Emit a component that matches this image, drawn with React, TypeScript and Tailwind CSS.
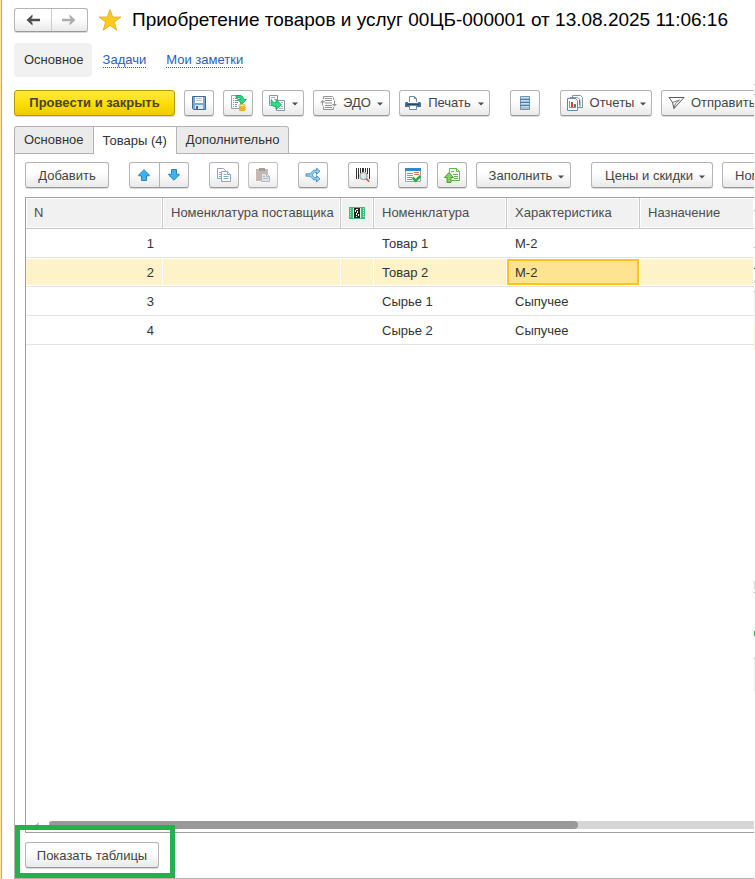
import React from 'react';
import clsx from 'clsx';

type ButtonProps = {
  children: React.ReactNode;
  label?: string;
  className?: string;
  disabled?: boolean;
};

const buttonBase =
  'flex h-[26px] shrink-0 items-center justify-center rounded-[3px] border border-[#b4b4b4] border-b-[#999] bg-linear-to-b from-white from-40% to-[#e9e9e9] whitespace-nowrap text-[#444] shadow-[0_1px_0_#d9d9d9]';

const ToolButton = ({ children, label, className, disabled }: ButtonProps) => (
  <button type="button" aria-label={label} disabled={disabled} className={clsx(buttonBase, className ?? 'w-[30px]')}>
    {children}
  </button>
);

const Caret = () => (
  <svg width="6" height="4" viewBox="0 0 6 4" className="mt-0.5 shrink-0">
    <path d="M0 0.5h6L3 3.5z" fill="#4d4d4d" />
  </svg>
);

const ArrowIcon = ({ color, flip }: { color: string; flip?: boolean }) => (
  <svg width="14" height="12" viewBox="0 0 14 12" className={flip ? 'rotate-180' : ''}>
    <path d="M6.5 0.5 0.5 6l6 5.500V8.700L5 7.200H14V4.800H5L6.500 3.300z" fill={color} />
  </svg>
);

const StarIcon = () => (
  <svg width="24" height="24" viewBox="0 0 24 24" className="shrink-0">
    <path
      d="M12 1.500 14.700 9h8.300l-6.600 5 2.400 8.300L12 17.400l-6.800 4.900L7.600 14 1 9h8.300z"
      fill="#fbcb1e"
      stroke="#e0ac0c"
      strokeWidth="0.8"
    />
  </svg>
);

const SaveIcon = () => (
  <svg width="16" height="16" viewBox="0 0 16 16">
    <path d="M1.500 1.500h13v13h-12l-1-1z" fill="#7ba7d4" stroke="#3f6a98" />
    <path d="M4 2h8v6H4z" fill="#fff" />
    <path d="M5 3.500h6M5 5.500h6" stroke="#a9c4de" />
    <path d="M4 10h8v4H4z" fill="#dfe6ec" />
    <path d="M5 11h2v3H5z" fill="#3f6a98" />
  </svg>
);

const PostIcon = () => (
  <svg width="18" height="18" viewBox="0 0 18 18">
    <path d="M2.500 1.500h9v13h-9z" fill="#fff" stroke="#8fa2b1" />
    <path d="M4 4.500h1M6 4.500h3M4 6.500h1M6 6.500h3M4 8.500h1M6 8.500h3M4 10.500h1M6 10.500h2M4 12.500h1M6 12.500h2" stroke="#8093a3" />
    <path d="M7 1.500h3c3.300 0 4.500 1.500 4.500 4H17.300L13 10 8.800 5.500H11.500C11.500 4 10 3.500 7 3.500z" fill="#27dc84" stroke="#109a52" strokeWidth="0.8" />
    <path d="M10 11.500v4.500c0 1.800 6.500 1.800 6.500 0v-4.500z" fill="#f3cc3c" />
    <path d="M10 13.500c1 1.400 5.500 1.400 6.500 0M10 15.500c1 1.400 5.500 1.400 6.500 0" stroke="#cb9715" fill="none" strokeWidth="0.8" />
    <ellipse cx="13.200" cy="11.500" rx="3.200" ry="1.300" fill="#fae67f" stroke="#cb9715" strokeWidth="0.6" />
  </svg>
);

const CreateFromIcon = () => (
  <svg width="18" height="18" viewBox="0 0 18 18">
    <path d="M1.500 1.500h8v10h-8z" fill="#fff" stroke="#8198aa" />
    <path d="M3 3.500h4M6 5.500h2" stroke="#9bb0c0" />
    <path d="M8.500 6.500h8v10h-8z" fill="#fff" stroke="#8198aa" />
    <path d="M11 14.500h4M13 12.500h2M13 8.500h2" stroke="#9bb0c0" />
    <path d="M3.500 5.500c.5 2.500 2 3 4.500 3V5.500l5.500 5.200L8 15.500v-3c-4 0-6-2-4.500-7z" fill="#2bdf85" stroke="#109a52" strokeWidth="0.8" />
  </svg>
);

const EdoIcon = () => (
  <svg width="17" height="16" viewBox="0 0 17 16" fill="none" stroke="#949494">
    <path d="M3.500 4V1.500h9l1 1V5M3.500 11.500v3h10V12" />
    <path d="M5 3.500h7M5 5.500h7M5 8h7M5 10.500h7M5 12.500h7" />
    <path d="M2.500 10.500v-4h2M14.500 5.500v4h-2" />
    <path d="M0 7.500h5L2.500 5zM12 9h5l-2.500 2.500z" fill="#949494" stroke="none" />
  </svg>
);

const PrintIcon = () => (
  <svg width="16" height="16" viewBox="0 0 16 16">
    <path d="M4.500 7V1.500h5l2 2V7" fill="#fff" stroke="#7289a0" />
    <path d="M9.500 1.500v2h2" fill="none" stroke="#7289a0" />
    <path d="M1 7h2v1h10V7h2l1 1v4H0V8z" fill="#41709f" />
    <path d="M2 9.500h12" stroke="#23496f" />
    <path d="M4.500 10.500h7v4h-7z" fill="#fff" stroke="#7289a0" />
  </svg>
);

const ListIcon = () => (
  <svg width="12" height="16" viewBox="0 0 12 16">
    <path d="M1.500 1.500h9v13h-9z" fill="#9fc3dd" stroke="#6c95b4" />
    <path d="M1 4.500h10M1 7.500h10M1 10.500h10" stroke="#4f7da2" />
    <path d="M2 2.500h8M2 5.500h8M2 8.500h8M2 11.500h8" stroke="#c9deed" />
  </svg>
);

const ReportsIcon = () => (
  <svg width="18" height="18" viewBox="0 0 18 18">
    <path d="M6.500 4V1.500h8l2 2v10H12" fill="#fff" stroke="#7d94a8" />
    <path d="M4 5V3.500h7.500l2.500 2v8h-2" fill="#fff" stroke="#7d94a8" />
    <path d="M1.500 4.500h8l2 2v10h-10z" fill="#fff" stroke="#6e869b" />
    <path d="M3.500 7v6.500H10" stroke="#7d94a8" fill="none" />
    <path d="M5 8h2v5H5z" fill="#e2382d" />
    <path d="M8 10h2v3H8z" fill="#27a04a" />
    <path d="M13.500 6v5" stroke="#27a04a" />
  </svg>
);

const SendIcon = () => (
  <svg width="17" height="16" viewBox="0 0 17 16" fill="none" stroke="#5a5a5a" strokeLinejoin="round">
    <path d="M1 2.500h15L6 13.500 4.500 7.500z" />
    <path d="M4.500 7.500 11.500 5M6 13.500l1.500-5 4-3.500" strokeWidth="0.8" />
  </svg>
);

const BlueArrow = ({ down }: { down?: boolean }) => (
  <svg width="12" height="12" viewBox="0 0 12 12" className={down ? 'rotate-180' : ''}>
    <path d="M6 .7 11.300 6v.8H8.500v4.700h-5V6.800H.700V6z" fill="#3db2f2" stroke="#2777a9" strokeWidth="0.9" />
  </svg>
);

const CopyIcon = () => (
  <svg width="16" height="16" viewBox="0 0 16 16" fill="#fff" stroke="#86a9bd">
    <path d="M1.500 1.500h6l2 2v8h-8z" />
    <path d="M3 5.500h2M3 7.500h2M3 9.500h2" />
    <path d="M5.500 4.500h6l3 3v7h-9z" />
    <path d="M11.500 4.500v3h3M7.500 7.500h3M7.500 9.500h5M7.500 11.500h5" />
  </svg>
);

const PasteIcon = () => (
  <svg width="16" height="16" viewBox="0 0 16 16">
    <path d="M1 2h12v12H1z" fill="#baa69d" />
    <path d="M4 1h6v3H4z" fill="#8d8885" />
    <path d="M6.500 6.500h5l3 3v5h-8z" fill="#d5dfe6" stroke="#9eabb5" />
    <path d="M11.500 6.500v3h3M8 9.500h2M8 11.500h5" stroke="#9eabb5" fill="none" />
  </svg>
);

const SplitIcon = () => (
  <svg width="16" height="16" viewBox="0 0 16 16">
    <path
      d="M1 6.800h4l3.500-3.600h3V1l3.500 3.200-3.500 3.200V5.300H9.300L7 8l2.300 2.700h2.200V8.600l3.500 3.200-3.500 3.200v-2.200h-3L5 9.200H1z"
      fill="#8dd3f8"
      stroke="#3c82b4"
      strokeWidth="0.8"
    />
  </svg>
);

const BarcodeIcon = () => (
  <svg width="16" height="16" viewBox="0 0 16 16">
    <path d="M1.500 1v11M5.500 1v5M10.500 1v4M14.500 1v11" stroke="#333" />
    <path d="M3 1h1v11H3zM7 1h2v4H7zM12 1h1v6h-1z" fill="#333" />
    <circle cx="8.500" cy="9" r="3.700" fill="#cfe8f9" stroke="#ad8b78" />
    <path d="m11.200 11.700 3 3" stroke="#c1623f" strokeWidth="1.800" />
  </svg>
);

const ChecklistIcon = () => (
  <svg width="16" height="16" viewBox="0 0 16 16">
    <path d="M.5 1.500h15v13H.5z" fill="#fff" stroke="#9aa5ad" />
    <path d="M0 1h16v3H0z" fill="#3387cd" />
    <path d="M2 6.500h6M2 8.500h6M2 10.500h5M2 12.500h5" stroke="#8c9399" />
    <path d="M9 5.500h5M9 7.500h5" stroke="#e2765c" />
    <path d="m7.500 10.500 3.200 3.200 4.800-4.800" stroke="#27b03e" strokeWidth="2.600" fill="none" />
  </svg>
);

const LoadIcon = () => (
  <svg width="16" height="16" viewBox="0 0 16 16">
    <path d="M5.500 5.500v-4h7l3 3v9h-8" fill="#fff" stroke="#64b24e" />
    <path d="M12.500 1.500v3h3M7 4.500h3M9 7.500h5M10 9.500h4M10 11.500h4" fill="none" stroke="#64b24e" />
    <path d="m5 5.500 4.500 5H7v5H3v-5H.5z" fill="#83d45c" stroke="#3f9330" strokeWidth="0.9" />
  </svg>
);

const MarkIcon = () => (
  <svg width="16" height="12" viewBox="0 0 16 12">
    <path d="M0 0h16v12H0z" fill="#3dbb78" />
    <path d="M1.500 1v10M14.500 1v10" stroke="#b9efd0" strokeDasharray="1 1" />
    <path d="M4 1h8v10H4z" fill="#d9f6e5" />
    <path d="M5 1h6v10H5z" fill="#222" />
    <path d="M7 2h2v1H7zM6 3h1v2H6zM8 4h1v2H8zM7 6h1v2H7zM9 7h1v2H9zM7 9h1v1H7z" fill="#fff" />
  </svg>
);

const tabs = ['Основное', 'Товары (4)', 'Дополнительно'];

const rows = [
  { n: 1, item: 'Товар 1', kind: 'М-2' },
  { n: 2, item: 'Товар 2', kind: 'М-2' },
  { n: 3, item: 'Сырье 1', kind: 'Сыпучее' },
  { n: 4, item: 'Сырье 2', kind: 'Сыпучее' },
];

const selectedRow = 2;

const HeadCell = ({ children }: { children: React.ReactNode }) => (
  <th className="border-r border-b border-[#c8c8c8] p-px font-normal last:border-r-0">
    <div className="flex h-7 items-center bg-[#f1f1f1] px-[7px] whitespace-nowrap text-[#4d4d4d]">{children}</div>
  </th>
);

const Cell = ({ children, selected, active, right }: { children?: React.ReactNode; selected: boolean; active?: boolean; right?: boolean }) => (
  <td className="border-b border-[#e2e2e2] p-0">
    <div className={clsx('h-7 border-y border-r border-white', selected && 'bg-[#fdf2c8]')}>
      <div
        className={clsx(
          'flex h-full items-center border-2 px-1.5 pt-0.5',
          active ? 'border-[#fdc51d] bg-[#fee491]' : 'border-transparent',
          right && 'justify-end',
        )}
      >
        {children}
      </div>
    </div>
  </td>
);

const ItemsTable = () => (
  <table className="w-full table-fixed border-separate border-spacing-0 text-left">
    <colgroup>
      <col className="w-[137px]" />
      <col className="w-[178px]" />
      <col className="w-[33px]" />
      <col className="w-[133px]" />
      <col className="w-[133px]" />
      <col />
    </colgroup>
    <thead>
      <tr>
        <HeadCell>N</HeadCell>
        <HeadCell>Номенклатура поставщика</HeadCell>
        <HeadCell><MarkIcon /></HeadCell>
        <HeadCell>Номенклатура</HeadCell>
        <HeadCell>Характеристика</HeadCell>
        <HeadCell>Назначение</HeadCell>
      </tr>
    </thead>
    <tbody>
      {rows.map((row) => {
        const selected = row.n === selectedRow;
        return (
          <tr key={row.n}>
            <Cell selected={selected} right>{row.n}</Cell>
            <Cell selected={selected} />
            <Cell selected={selected} />
            <Cell selected={selected}>{row.item}</Cell>
            <Cell selected={selected} active={selected}>{row.kind}</Cell>
            <Cell selected={selected} />
          </tr>
        );
      })}
    </tbody>
  </table>
);

const App = () => {
  return (
    <div className="flex min-h-screen overflow-hidden bg-white font-['Liberation_Sans',Arial,sans-serif] text-[13px] leading-4 text-[#333]">
      <div className="w-0.5 shrink-0 border-r border-[#c3ae55] bg-[#fbeb9e]" />

      <main className="flex min-w-0 flex-1 flex-col overflow-hidden pt-2 pl-3">
        {/* Title */}
        <header className="flex h-6 items-center">
          <div className="flex h-6 w-[74px] shrink-0 rounded-[3px] border border-[#b4b4b4] border-b-[#999] bg-linear-to-b from-white from-40% to-[#e9e9e9] shadow-[0_1px_0_#d9d9d9]">
            <button type="button" aria-label="Назад" className="flex flex-1 items-center justify-center border-r border-[#ccc]">
              <ArrowIcon color="#4d4d4d" />
            </button>
            <button type="button" aria-label="Вперед" className="flex flex-1 items-center justify-center">
              <ArrowIcon color="#adadad" flip />
            </button>
          </div>
          <div className="ml-2.5"><StarIcon /></div>
          <h1 className="ml-2.5 text-[19px] leading-6 whitespace-nowrap text-black">
            Приобретение товаров и услуг 00ЦБ-000001 от 13.08.2025 11:06:16
          </h1>
        </header>

        {/* Sections */}
        <nav className="mt-[11px] flex items-center">
          <span className="rounded-[4px] bg-[#f1f1f1] py-[9px] pr-2 pl-2.5">Основное</span>
          <a href="#tasks" className="ml-[11px] border-b border-dotted border-[#2a5db8] leading-[14px] text-[#2a5db8]">Задачи</a>
          <a href="#notes" className="ml-5 border-b border-dotted border-[#2a5db8] leading-[14px] text-[#2a5db8]">Мои заметки</a>
        </nav>

        {/* Document commands */}
        <div className="mt-[13px] flex gap-[9px]">
          <button
            type="button"
            className="h-[26px] w-[161px] shrink-0 rounded-[3px] border border-[#b39b00] bg-linear-to-b from-[#ffe83a] via-[#ffdf00] to-[#eccb00] font-bold whitespace-nowrap text-[#4b4320] shadow-[0_1px_0_#d9d9d9]"
          >
            Провести и закрыть
          </button>
          <ToolButton label="Записать"><SaveIcon /></ToolButton>
          <ToolButton label="Провести"><PostIcon /></ToolButton>
          <ToolButton label="Создать на основании" className="w-[42px] gap-1.5"><CreateFromIcon /><Caret /></ToolButton>
          <ToolButton className="w-[77px] gap-1.5"><EdoIcon />ЭДО<Caret /></ToolButton>
          <ToolButton className="w-[91px] gap-[7px]"><PrintIcon />Печать<Caret /></ToolButton>
          <ToolButton label="Список" className="ml-[11px] w-[30px]"><ListIcon /></ToolButton>
          <ToolButton className="ml-[11px] w-[92px] gap-1.5"><ReportsIcon />Отчеты<Caret /></ToolButton>
          <ToolButton className="gap-1.5 px-1.5"><SendIcon />Отправить</ToolButton>
        </div>

        {/* Tabs */}
        <div role="tablist" className="mt-2.5 flex h-7 border-b border-[#b4b4b4]">
          {tabs.map((tab, i) => (
            <button
              key={tab}
              type="button"
              role="tab"
              aria-selected={i === 1}
              className={clsx(
                'h-7 border-t border-[#b4b4b4] px-[9px] whitespace-nowrap',
                i === 0 && 'rounded-tl-[3px] border-b border-l bg-[#ebebeb]',
                i === 1 && 'border-x bg-white',
                i === 2 && 'rounded-tr-[3px] border-r border-b bg-[#ebebeb]',
              )}
            >
              {tab}
            </button>
          ))}
        </div>

        <section className="flex flex-1 flex-col border-b border-l border-[#b4b4b4] pt-2 pl-2.5">
          {/* Table commands */}
          <div className="flex gap-[9px]">
            <ToolButton className="w-[84px] pt-px">Добавить</ToolButton>
            <div className="ml-[11px] flex h-[26px] w-[60px] shrink-0 rounded-[3px] border border-[#b4b4b4] border-b-[#999] bg-linear-to-b from-white from-40% to-[#e9e9e9] shadow-[0_1px_0_#d9d9d9]">
              <button type="button" aria-label="Переместить вверх" className="flex flex-1 items-center justify-center border-r border-[#b4b4b4]">
                <BlueArrow />
              </button>
              <button type="button" aria-label="Переместить вниз" className="flex flex-1 items-center justify-center">
                <BlueArrow down />
              </button>
            </div>
            <ToolButton label="Скопировать" className="ml-[11px] w-[30px]"><CopyIcon /></ToolButton>
            <ToolButton label="Вставить" disabled className="w-[30px] opacity-80"><PasteIcon /></ToolButton>
            <ToolButton label="Разбить строку" className="ml-[11px] w-[30px]"><SplitIcon /></ToolButton>
            <ToolButton label="Поиск по штрихкоду" className="ml-[11px] w-[30px]"><BarcodeIcon /></ToolButton>
            <ToolButton label="Проверить" className="ml-[11px] w-[30px]"><ChecklistIcon /></ToolButton>
            <ToolButton label="Загрузить"><LoadIcon /></ToolButton>
            <ToolButton className="w-[95px] gap-1.5 pt-px pl-1.5">Заполнить<Caret /></ToolButton>
            <ToolButton className="ml-[11px] w-[122px] gap-1.5 pt-px pl-1.5">Цены и скидки<Caret /></ToolButton>
            <ToolButton className="px-3 pt-px">Ном</ToolButton>
          </div>

          <div className="mt-[9px] flex flex-1 flex-col border border-r-0 border-[#a0a0a0]">
            <ItemsTable />
            <div className="mt-auto mb-[3px] flex h-2 items-center">
              <svg width="23" height="8" viewBox="0 0 23 8" className="shrink-0">
                <path d="M13 1v6L9 4z" fill="#c4c4c4" />
              </svg>
              <div className="h-2 flex-1 bg-[#d6d6d6]">
                <div className="h-2 w-3/4 rounded-full bg-[#999]" />
              </div>
            </div>
          </div>

          {/* Highlighted command */}
          <div className="relative flex pt-[9px] pb-2.5">
            <div className="pointer-events-none absolute -top-2 bottom-0 -left-2.5 w-40 border-[5px] border-[#22b14c]" />
            <ToolButton className="w-[134px] pt-px">Показать таблицы</ToolButton>
          </div>
        </section>
      </main>

      {/* Edge of the neighbouring window */}
      <div className="flex w-px shrink-0 flex-col bg-white">
        <div className="mt-[84px] h-px bg-[#a0a0a0]" />
        <div className="mt-[9px] h-px bg-[#a0a0a0]" />
        <div className="mt-[115px] h-px bg-[#a0a0a0]" />
        <div className="mt-[36px] h-px bg-[#a0a0a0]" />
        <div className="mt-[20px] h-px bg-[#4d4d4d]" />
        <div className="mt-[12px] h-px bg-[#a0a0a0]" />
        <div className="mt-[9px] h-px bg-[#a0a0a0]" />
        <div className="h-8 bg-[#f1f1f1]" />
        <div className="h-[27px] bg-[#fdf2c8]" />
        <div className="mt-[230px] h-2 bg-[#d6d6d6]" />
        <div className="mt-[3px] h-px bg-[#a0a0a0]" />
        <div className="mt-[38px] h-[5px] bg-[#22b14c]" />
        <div className="mt-[22px] h-px bg-[#a0a0a0]" />
        <div className="mt-px h-7 bg-[#f1f1f1]" />
        <div className="mt-px h-px bg-[#c8c8c8]" />
      </div>
    </div>
  );
};

export default App;
